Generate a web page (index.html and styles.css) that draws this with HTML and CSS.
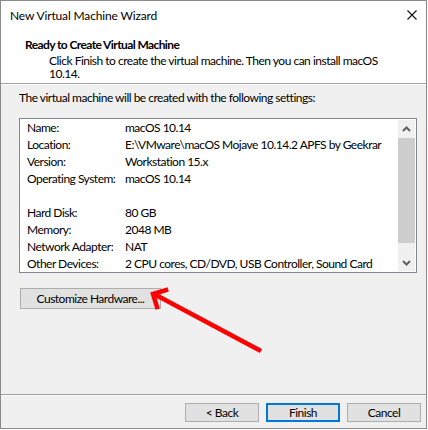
FILE: index.html
```html
<!DOCTYPE html>
<html>
<head>
<meta charset="utf-8">
<title>New Virtual Machine Wizard</title>
<link rel="stylesheet" href="styles.css">
</head>
<body>
<div class="window">
  <div class="titlebar">
    <span class="title">New Virtual Machine Wizard</span>
    <svg class="close" width="10" height="10" viewBox="0 0 10 10"><path d="M0.5 0.5L9.5 9.5M9.5 0.5L0.5 9.5" stroke="#111" stroke-width="1.1" fill="none"/></svg>
  </div>
  <div class="header">
    <div class="heading">Ready to Create Virtual Machine</div>
    <div class="subtitle">Click Finish to create the virtual machine. Then you can install macOS<br>10.14.</div>
  </div>
  <div class="content">
    <div class="intro">The virtual machine will be created with the following settings:</div>
    <div class="listbox">
      <div class="rows">
        <div class="row"><span class="label">Name:</span><span class="value">macOS 10.14</span></div>
        <div class="row"><span class="label">Location:</span><span class="value">E:\VMware\macOS Mojave 10.14.2 APFS by Geekrar</span></div>
        <div class="row"><span class="label">Version:</span><span class="value">Workstation 15.x</span></div>
        <div class="row"><span class="label">Operating System:</span><span class="value">macOS 10.14</span></div>
        <div class="row"><span class="label"></span><span class="value"></span></div>
        <div class="row"><span class="label">Hard Disk:</span><span class="value">80 GB</span></div>
        <div class="row"><span class="label">Memory:</span><span class="value">2048 MB</span></div>
        <div class="row"><span class="label">Network Adapter:</span><span class="value">NAT</span></div>
        <div class="row"><span class="label">Other Devices:</span><span class="value">2 CPU cores, CD/DVD, USB Controller, Sound Card</span></div>
      </div>
      <div class="scrollbar">
        <div class="sb-btn"><svg width="9" height="6" viewBox="0 0 9 6"><path d="M1 5L4.5 1.5L8 5" stroke="#606060" stroke-width="2" fill="none"/></svg></div>
        <div class="sb-thumb"></div>
        <div class="sb-track"></div>
        <div class="sb-btn"><svg width="9" height="6" viewBox="0 0 9 6"><path d="M1 1L4.5 4.5L8 1" stroke="#606060" stroke-width="2" fill="none"/></svg></div>
      </div>
    </div>
    <button class="btn custom">Customize Hardware...</button>
  </div>
  <div class="footer">
    <button class="btn">&lt; Back</button>
    <button class="btn primary">Finish</button>
    <button class="btn">Cancel</button>
  </div>
</div>
<svg class="annot" width="428" height="430" viewBox="0 0 428 430">
  <g stroke="#ff0000" stroke-width="4.5" fill="none" stroke-linecap="square">
    <line x1="259" y1="350" x2="156" y2="295"/>
    <polyline points="166,290 153,294 157,307"/>
  </g>
</svg>
</body>
</html>
```

FILE: styles.css
```css
* { box-sizing: border-box; }
html, body { margin: 0; padding: 0; }
body {
  background: #ffffff;
  font-family: "Lato", "Noto Sans", sans-serif;
  font-size: 12px;
  letter-spacing: -0.5px;
  color: #000;
  width: 428px;
  height: 430px;
  position: relative;
  overflow: hidden;
}
.window {
  width: 427px;
  height: 429px;
  border: 1px solid #8a8a8a;
  display: flex;
  flex-direction: column;
  background: #f0f0f0;
}
.titlebar {
  height: 29px;
  background: #fff;
  display: flex;
  align-items: flex-start;
  justify-content: space-between;
  padding: 7px 9px 0 9px;
}
.title { line-height: 15px; letter-spacing: -0.15px; }
.close { margin-top: 2px; margin-right: 0; }
.header {
  height: 54px;
  background: #fff;
  border-bottom: 1px solid #a0a0a0;
  padding: 7px 0 0 24px;
}
.heading { font-weight: bold; line-height: 15px; letter-spacing: -0.6px; }
.subtitle { line-height: 13px; margin-top: 2px; padding-left: 24px; white-space: nowrap; }
.content {
  flex: 1;
  border-top: 1px solid #fff;
  border-bottom: 1px solid #a0a0a0;
  padding: 5px 0 0 18px;
  display: flex;
  flex-direction: column;
  align-items: flex-start;
}
.intro { line-height: 15px; }
.listbox {
  margin-top: 13px;
  width: 398px;
  height: 155px;
  border: 1px solid #828790;
  background: #fff;
  display: flex;
  padding: 0 1px 0 0;
}
.rows { flex: 1; padding-left: 7px; }
.row { display: flex; height: 17px; line-height: 17px; white-space: nowrap; }
.label { width: 98px; flex: none; }
.scrollbar {
  width: 17px;
  margin: 1px 0;
  background: #f0f0f0;
  display: flex;
  flex-direction: column;
}
.sb-btn {
  height: 17px;
  display: flex;
  align-items: center;
  justify-content: center;
}
.sb-thumb { height: 105px; background: #cdcdcd; margin-top: 1px; }
.sb-track { flex: 1; }
.btn {
  font-family: inherit;
  font-size: 12px;
  letter-spacing: inherit;
  color: #000;
  background: #e1e1e1;
  border: 1px solid #adadad;
  border-radius: 0;
  padding: 0;
  margin: 0;
  line-height: 15px;
}
.custom {
  margin: 15px 0 0 1px;
  width: 141px;
  height: 21px;
}
.footer {
  height: 33px;
  border-top: 1px solid #fff;
  display: flex;
  justify-content: flex-end;
  gap: 7px;
  padding: 7px 5px 0 0;
}
.footer .btn { width: 74px; height: 19px; }
.footer .primary { border: 2px solid #0078d7; }
.annot {
  position: absolute;
  left: 0;
  top: 0;
  pointer-events: none;
}
```
